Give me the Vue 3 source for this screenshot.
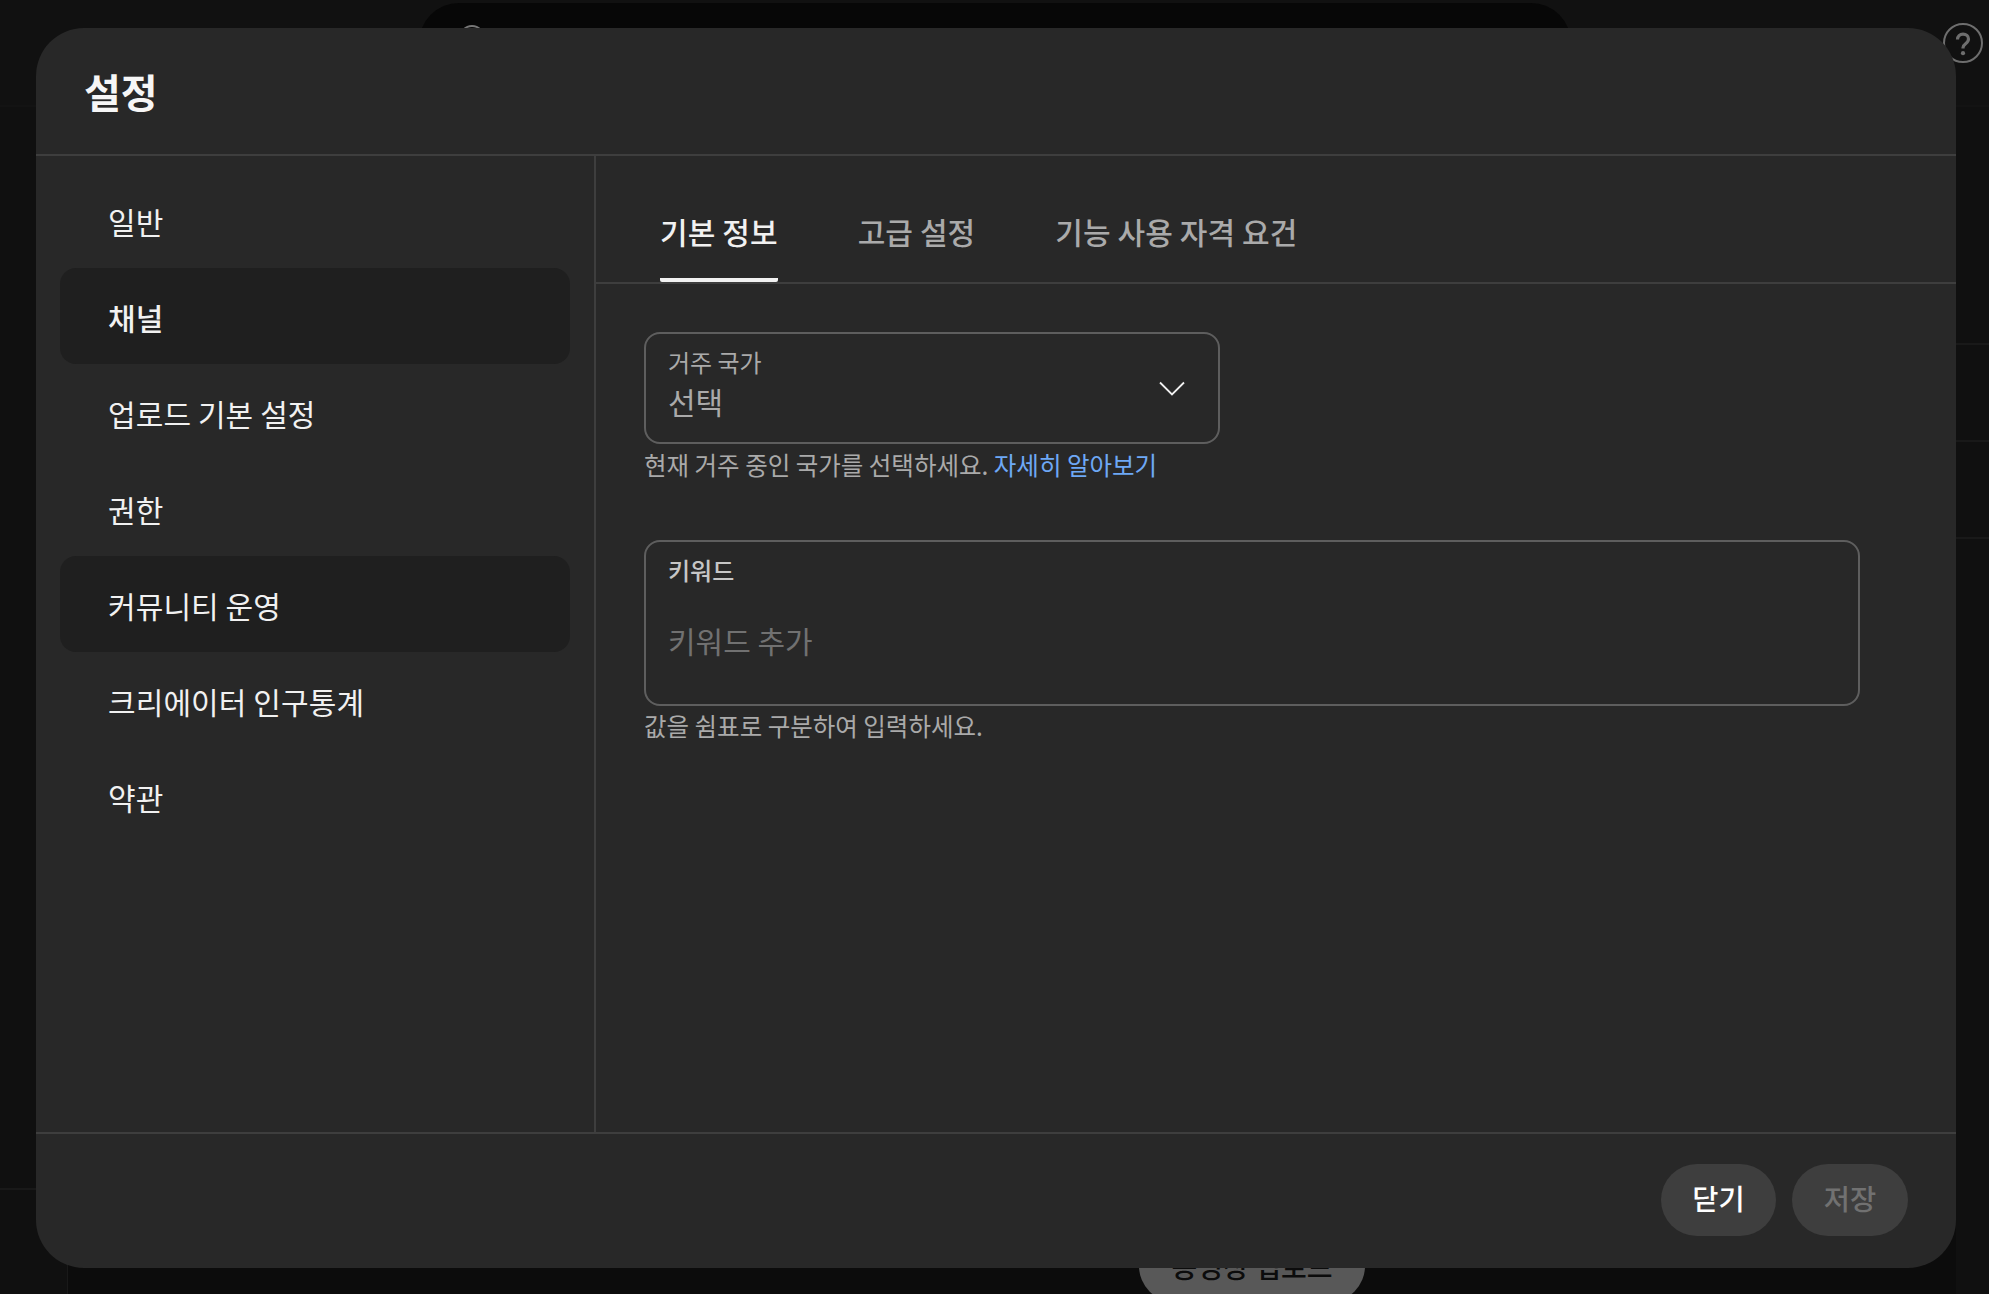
<script setup>
const navItems = [
  { label: '일반' },
  { label: '채널', active: true },
  { label: '업로드 기본 설정' },
  { label: '권한' },
  { label: '커뮤니티 운영', hover: true },
  { label: '크리에이터 인구통계' },
  { label: '약관' },
]
const tabs = [
  { label: '기본 정보', active: true },
  { label: '고급 설정' },
  { label: '기능 사용 자격 요건' },
]
</script>

<template>
  <div class="page">
    <div class="page-top">
      <div class="search-bar"><span class="search-ring"></span></div>
    </div>
    <div class="page-main">
      <div class="rail">
        <div class="rail-gap"></div>
      </div>
      <div class="canvas"></div>
      <div class="strip">
        <div class="strip-row"></div>
        <div class="strip-row"></div>
        <div class="strip-row"></div>
      </div>
    </div>
    <svg class="help" viewBox="0 0 40 40" width="40" height="40" aria-hidden="true">
      <circle cx="20" cy="20" r="19" fill="none" stroke="#6e6e6e" stroke-width="2" />
      <path d="M14.500 16.500c0-3.300 2.300-5.300 5.500-5.300s5.500 1.900 5.500 4.900c0 2.400-1.400 3.500-2.900 4.600-1.700 1.200-2.600 2.100-2.600 4.100v.6" fill="none" stroke="#6e6e6e" stroke-width="3.200" />
      <circle cx="20" cy="30.200" r="2.100" fill="#6e6e6e" />
    </svg>
    <div class="upload-btn">동영상 업로드</div>

    <section class="dialog">
      <header class="dialog-head">
        <h1 class="title">설정</h1>
      </header>

      <div class="dialog-body">
        <nav class="side">
          <div
            v-for="item in navItems"
            :key="item.label"
            class="side-item"
            :class="{ active: item.active, hover: item.hover }"
          >{{ item.label }}</div>
        </nav>

        <main class="content">
          <div class="tabs">
            <div
              v-for="tab in tabs"
              :key="tab.label"
              class="tab"
              :class="{ active: tab.active }"
            >{{ tab.label }}</div>
          </div>

          <div class="form">
            <div class="field-select">
              <div class="select-text">
                <div class="field-label">거주 국가</div>
                <div class="select-value">선택</div>
              </div>
              <svg class="chevron" viewBox="0 0 26 15" width="26" height="15" aria-hidden="true">
                <path d="M1 1.500l12 12 12-12" fill="none" stroke="#f1f1f1" stroke-width="1.800" />
              </svg>
            </div>
            <p class="hint">현재 거주 중인 국가를 선택하세요. <a class="link">자세히 알아보기</a></p>

            <div class="field-keywords">
              <div class="field-label strong">키워드</div>
              <div class="placeholder">키워드 추가</div>
            </div>
            <p class="hint">값을 쉼표로 구분하여 입력하세요.</p>
          </div>
        </main>
      </div>

      <footer class="dialog-foot">
        <button class="btn primary" type="button">닫기</button>
        <button class="btn disabled" type="button">저장</button>
      </footer>
    </section>
  </div>
</template>

<style>
html, body { margin: 0; background: #0c0c0c; }
</style>

<style scoped>
.page {
  position: relative;
  width: 1989px;
  height: 1294px;
  overflow: hidden;
  display: flex;
  flex-direction: column;
  background: #0c0c0c;
  font-family: "Noto Sans CJK KR", "Noto Sans", sans-serif;
}
.page-top {
  flex: none;
  height: 107px;
  box-sizing: border-box;
  padding: 3px 0 0 419px;
  background: #111111;
  border-bottom: 2px solid #131313;
}
.search-bar {
  position: relative;
  width: 1152px;
  height: 80px;
  border-radius: 40px;
  background: #070707;
}
.search-ring {
  position: absolute;
  left: 40px;
  top: 22px;
  width: 22px;
  height: 22px;
  border: 2px solid #777;
  border-radius: 50%;
}
.page-main {
  flex: 1;
  min-height: 0;
  display: flex;
}
.rail {
  flex: none;
  width: 68px;
  box-sizing: border-box;
  background: #101010;
  border-right: 1px solid #191919;
}
.rail-gap {
  height: 1081px;
  box-sizing: content-box;
  border-bottom: 2px solid #191919;
}
.canvas { flex: 1; }
.strip {
  flex: none;
  width: 33px;
  background: #101010;
  padding-top: 236px;
}
.strip-row {
  height: 95px;
  border-top: 2px solid #191919;
}
.help { position: absolute; left: 1943px; top: 23px; }
.upload-btn {
  position: absolute;
  left: 1139px;
  top: 1230px;
  width: 226px;
  height: 72px;
  border-radius: 36px;
  background: #585858;
  color: #0c0c0c;
  font-size: 28px;
  font-weight: 500;
  line-height: 72px;
  text-align: center;
}
.dialog {
  position: absolute;
  left: 36px;
  top: 28px;
  width: 1920px;
  height: 1240px;
  display: flex;
  flex-direction: column;
  border-radius: 48px;
  background: #282828;
  color: #f1f1f1;
}
.dialog-head {
  flex: none;
  height: 126px;
  padding: 0 48px;
  display: flex;
  align-items: center;
  box-sizing: content-box;
  border-bottom: 2px solid #3e3e3e;
}
.title {
  margin: 0;
  font-size: 40px;
  font-weight: 700;
  color: #f6f6f6;
  line-height: 1;
}
.dialog-body {
  flex: 1;
  min-height: 0;
  display: flex;
}
.side {
  flex: none;
  width: 558px;
  box-sizing: content-box;
  border-right: 2px solid #3e3e3e;
  padding-top: 16px;
  display: flex;
  flex-direction: column;
}
.side-item {
  height: 96px;
  margin: 0 24px;
  width: 510px;
  padding: 1px 48px 0;
  box-sizing: border-box;
  display: flex;
  align-items: center;
  border-radius: 16px;
  font-size: 30px;
  letter-spacing: 0.1px;
}
.side-item.active, .side-item.hover { background: #1f1f1f; }
.side-item.active { font-weight: 500; }
.content { flex: 1; min-width: 0; }
.tabs {
  height: 126px;
  box-sizing: content-box;
  display: flex;
  gap: 80px;
  padding-left: 64px;
  border-bottom: 2px solid #3e3e3e;
}
.tab {
  height: 126px;
  box-sizing: border-box;
  padding-top: 53px;
  font-size: 30px;
  font-weight: 500;
  line-height: 44px;
  letter-spacing: 0.1px;
  color: #aaaaaa;
  border-bottom: 4px solid transparent;
}
.tab.active {
  color: #f1f1f1;
  border-bottom-color: #f1f1f1;
  border-radius: 0 0 2px 2px;
}
.form { padding: 48px 0 0 48px; }
.field-select {
  width: 576px;
  height: 112px;
  box-sizing: border-box;
  border: 2px solid #5e5e5e;
  border-radius: 16px;
  display: flex;
  align-items: center;
  justify-content: space-between;
  padding: 0 33px 0 22px;
}
.select-text {
  display: flex;
  flex-direction: column;
  padding-bottom: 9px;
}
.field-label {
  font-size: 24px;
  line-height: 36px;
  color: #aaaaaa;
}
.field-label.strong { color: #c6c6c6; font-weight: 500; }
.select-value {
  margin-top: -1px;
  font-size: 30px;
  line-height: 44px;
  color: #aaaaaa;
}
.hint {
  margin: 0;
  padding-top: 4px;
  font-size: 24.5px;
  line-height: 34px;
  color: #aaaaaa;
}
.link { color: #6ea8f6; }
.field-keywords {
  width: 1216px;
  height: 166px;
  margin-top: 58px;
  box-sizing: border-box;
  border: 2px solid #5e5e5e;
  border-radius: 16px;
  padding: 10px 22px 0;
}
.field-keywords + .hint { padding-top: 3px; }
.placeholder {
  margin-top: 30px;
  font-size: 30px;
  line-height: 44px;
  color: #717171;
}
.dialog-foot {
  flex: none;
  height: 136px;
  box-sizing: border-box;
  border-top: 2px solid #3e3e3e;
  padding: 30px 48px 0 0;
  display: flex;
  justify-content: flex-end;
  gap: 16px;
}
.btn {
  width: 116px;
  height: 72px;
  padding: 0 0 4px;
  border: 0;
  border-radius: 36px;
  background: #3e3e3e;
  font-family: inherit;
  font-size: 28.5px;
  font-weight: 500;
  line-height: 68px;
}
.btn.primary { width: 115px; color: #ffffff; }
.btn.disabled { color: #717171; }
</style>
